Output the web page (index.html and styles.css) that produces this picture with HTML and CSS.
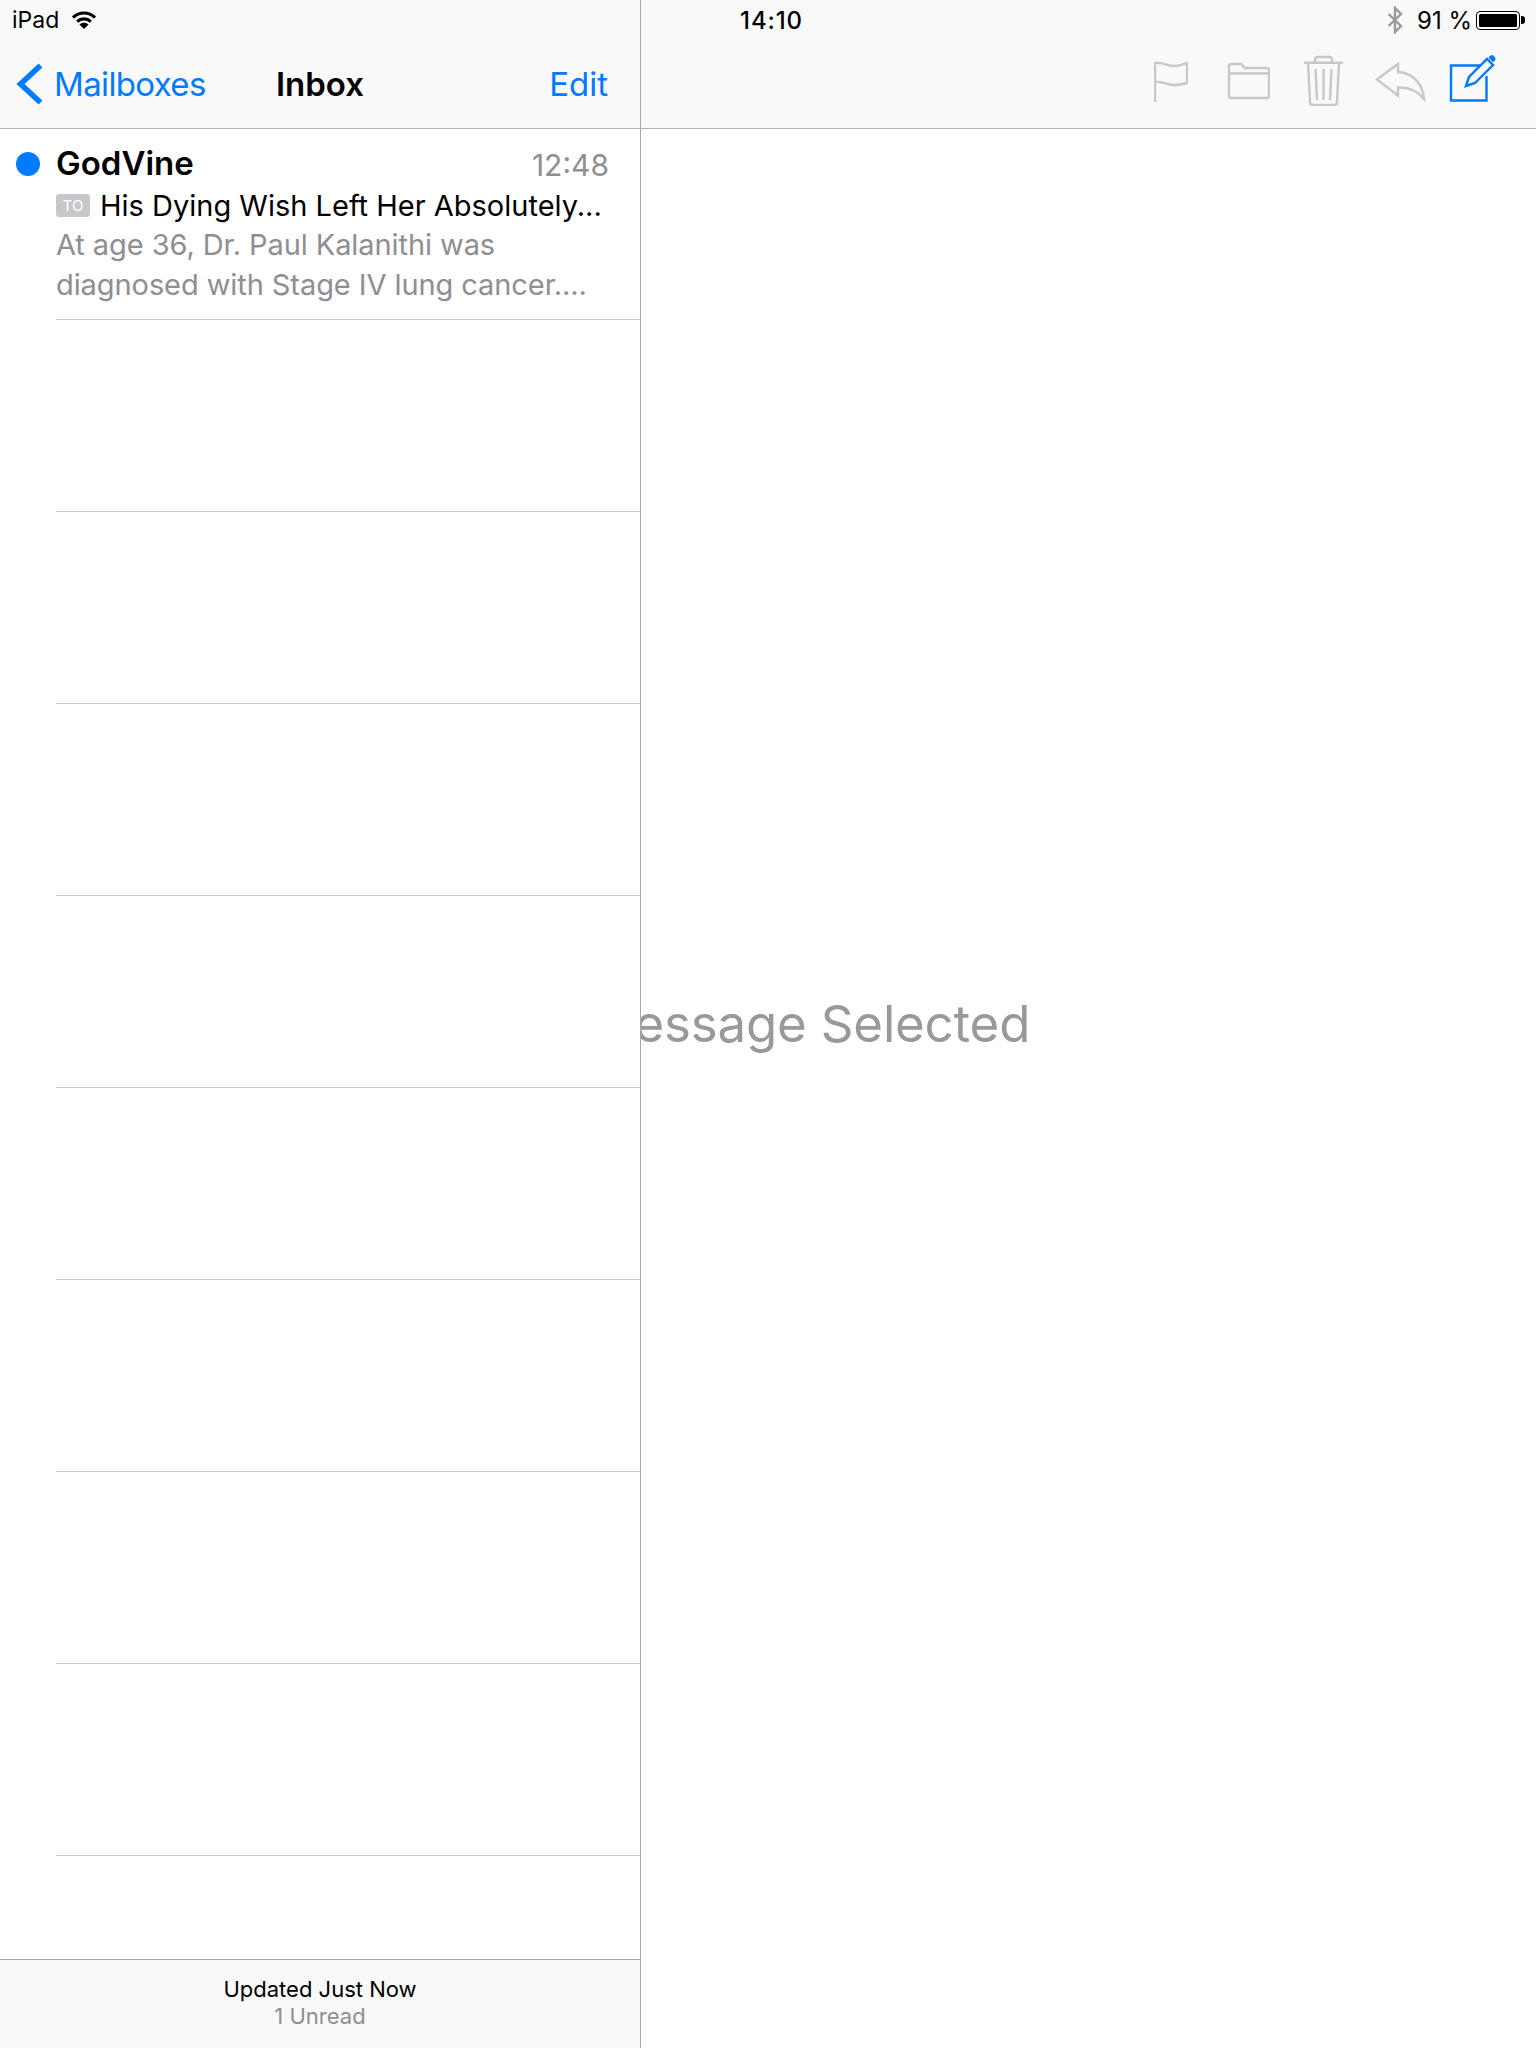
FILE: index.html
```html
<!DOCTYPE html>
<html lang="en">
<head>
<meta charset="utf-8">
<title>Inbox</title>
<link rel="stylesheet" href="styles.css">
</head>
<body>
<div class="app">
  <div class="status">
    <div class="status-left">
      <span>iPad</span>
      <svg class="wifi" viewBox="0 0 24 18"><path class="wifi-arc" d="M1 6.500C7.300 .5 16.700 .5 23 6.500"/><path class="wifi-arc" d="M5.200 10.700C9.200 7 14.800 7 18.800 10.700"/><path class="wifi-dot" d="M12 18L7.400 13.500C10.200 11 13.800 11 16.600 13.500Z"/></svg>
    </div>
    <div class="status-time">14:10</div>
    <div class="status-right">
      <svg class="bt" viewBox="0 0 16 28"><path d="M1.500 8L14 20L8 26V2L14 8L1.500 20"/></svg>
      <span class="batt-text">91 %</span>
      <span class="batt"><span class="batt-fill"></span></span>
      <span class="batt-nub"></span>
    </div>
  </div>

  <aside class="master">
    <header class="nav">
      <svg class="chev" viewBox="0 0 30 44"><path d="M25.500 3.500L5.500 22L25.500 40.500"/></svg>
      <span class="back">Mailboxes</span>
      <span class="title">Inbox</span>
      <span class="edit">Edit</span>
    </header>
    <div class="list">
      <div class="row">
        <div class="row-body">
          <div class="sender-line">
            <span class="dot"></span>
            <span class="sender">GodVine</span>
            <span class="time">12:48</span>
          </div>
          <div class="subject-line"><span class="to">TO</span><span class="subject">His Dying Wish Left Her Absolutely...</span></div>
          <div class="preview">At age 36, Dr. Paul Kalanithi was<br>diagnosed with Stage IV lung cancer....</div>
        </div>
      </div>
      <div class="row"></div>
      <div class="row"></div>
      <div class="row"></div>
      <div class="row"></div>
      <div class="row"></div>
      <div class="row"></div>
      <div class="row"></div>
      <div class="row"></div>
    </div>
    <footer class="foot">
      <div class="foot-a">Updated Just Now</div>
      <div class="foot-b">1 Unread</div>
    </footer>
  </aside>

  <main class="detail">
    <div class="tools">
      <svg class="ic ic-flag" viewBox="1154 54 34 52"><path d="M1155 102V63C1163 62 1168 66 1174 66C1179 66 1183 64 1187 63V83C1183 84 1179 85 1174 85C1168 85 1163 81 1155 82"/></svg>
      <svg class="ic ic-folder" viewBox="1227 54 43 52"><path d="M1229 96V66q0-2 2-2H1241l4 4H1267q2 0 2 2V96q0 2-2 2H1231q-2 0-2-2ZM1229 73.500H1269"/></svg>
      <svg class="ic ic-trash" viewBox="1304 54 39 52"><path d="M1304 62.800H1343M1315 62.800V60q0-3 3-3H1329q3 0 3 3V62.800M1308 63L1310 102q0 3 3 3H1334q3 0 3-3L1339 63M1315.500 69L1317 100M1323.500 69V100M1331.500 69L1330 100"/></svg>
      <svg class="ic ic-reply" viewBox="1375 54 51 52"><path d="M1377 79.500L1398 64V72C1414 73 1423 85 1424 99C1417 90 1408 87 1398 87.500V95.500Z"/></svg>
      <svg class="ic ic-compose" viewBox="1449 54 49 52"><path d="M1480 65.500H1451V100.500H1486.500V76"/><path d="M1466 86L1469 77L1487 59L1493 65L1475 83Z"/><path class="cap" d="M1488.500 57.500L1490.500 55.500Q1492 54.500 1493.500 55.800L1495 57.300Q1496 58.800 1495 60.300L1493 62.300Z"/></svg>
    </div>
    <div class="empty">No Message Selected</div>
  </main>
</div>
</body>
</html>
```
FILE: styles.css
```css
* { box-sizing: border-box; }
html, body { margin: 0; padding: 0; }
body {
  width: 1536px;
  height: 2048px;
  overflow: hidden;
  background: #fff;
  font-family: Inter, "Liberation Sans", sans-serif;
  color: #000;
}
.app { position: relative; display: flex; width: 1536px; height: 2048px; }

/* status bar overlays both panes */
.status {
  position: absolute;
  z-index: 2;
  top: 0; left: 0; right: 0;
  height: 40px;
  display: grid;
  grid-template-columns: 1fr auto 1fr;
  align-items: center;
  padding: 0 11px 0 12px;
  font-size: 23px;
}
.status-left { display: flex; align-items: center; gap: 13px; }
.wifi { width: 24px; height: 18px; margin-top: -1px; }
.wifi-arc { fill: none; stroke: #000; stroke-width: 3.200; }
.wifi-dot { fill: #000; }
.status-time { font-size: 24px; font-weight: 500; letter-spacing: .9px; margin: 1px 0 0 6px; }
.status-right { display: flex; align-items: center; justify-content: flex-end; }
.bt { width: 16px; height: 28px; margin-right: 14px; }
.bt path { fill: none; stroke: #999; stroke-width: 2.400; }
.batt-text { font-size: 24px; margin-right: 4px; }
.batt { width: 44px; height: 19px; border: 1px solid #000; border-radius: 4px; padding: 2px; display: flex; }
.batt-fill { flex: 1; background: #000; border-radius: 1.500px; }
.batt-nub { width: 4px; height: 8px; background: #000; border-radius: 0 3px 3px 0; margin-left: 1px; }

/* left pane */
.master {
  position: relative;
  z-index: 1;
  flex: none;
  width: 641px;
  height: 2048px;
  display: flex;
  flex-direction: column;
  background: #fff;
  border-right: 1px solid #a8a8ab;
}
.nav {
  position: relative;
  flex: none;
  height: 129px;
  padding-top: 40px;
  display: flex;
  align-items: center;
  background: #f9f9f9;
  border-bottom: 1px solid #b2b2b2;
  font-size: 33px;
}
.chev { flex: none; width: 30px; height: 44px; margin: 0 0 0 15px; }
.chev path { fill: none; stroke: #007aff; stroke-width: 5.500; }
.back { color: #007aff; margin-left: 9px; letter-spacing: -.65px; }
.title { position: absolute; left: 0; right: 0; bottom: 24px; text-align: center; font-weight: 600; }
.edit { color: #007aff; margin-left: auto; margin-right: 32px; }

.list { flex: 1; margin-top: -1px; }
.row { height: 192px; margin-left: 56px; border-bottom: 1px solid #c8c7cc; }
.row-body { position: relative; margin-left: -56px; padding: 15px 31px 0 56px; }
.sender-line { display: flex; align-items: baseline; height: 41px; }
.dot { position: absolute; left: 16px; top: 24px; width: 24px; height: 24px; border-radius: 50%; background: #007aff; }
.sender { font-size: 33px; font-weight: 600; }
.time { margin-left: auto; font-size: 30px; color: #8e8e93; position: relative; top: 1px; }
.subject-line { display: flex; align-items: center; height: 40px; margin-top: 1px; }
.to { flex: none; width: 34px; height: 23px; margin: 0 10px 0 0; border-radius: 3px; background: #c8c7cc; color: #fff; font-size: 15px; line-height: 23px; text-align: center; }
.subject { font-size: 29px; white-space: nowrap; }
.preview { font-size: 29px; line-height: 40px; color: #8e8e93; white-space: nowrap; letter-spacing: -.08px; }

.foot {
  flex: none;
  height: 89px;
  padding-top: 16px;
  background: #f9f9f9;
  border-top: 1px solid #a8a8ab;
  text-align: center;
  font-size: 22px;
  line-height: 27px;
}
.foot-b { color: #8e8e93; }

/* right pane: empty label centres on the whole screen, slipping under the list */
.detail { flex: 1; min-width: 0; display: flex; flex-direction: column; }
.tools {
  flex: none;
  height: 129px;
  padding: 54px 38px 0 0;
  display: flex;
  align-items: flex-start;
  justify-content: flex-end;
  background: #f9f9f9;
  border-bottom: 1px solid #b2b2b2;
}
.ic { flex: none; height: 52px; }
.ic path { fill: none; stroke: #c8c8c8; stroke-width: 2.400; }
.ic-flag { width: 34px; }
.ic-folder { width: 43px; margin-left: 39px; }
.ic-trash { width: 39px; margin-left: 34px; }
.ic-reply { width: 51px; margin-left: 32px; }
.ic-compose { width: 49px; margin-left: 23px; }
.ic-compose path { stroke: #007aff; }
.ic-compose .cap { fill: #007aff; stroke: none; }
.empty {
  flex: 1;
  margin-left: -641px;
  padding-bottom: 131px;
  display: flex;
  align-items: center;
  justify-content: center;
  font-size: 51px;
  letter-spacing: -.18px;
  color: #999;
}
```
